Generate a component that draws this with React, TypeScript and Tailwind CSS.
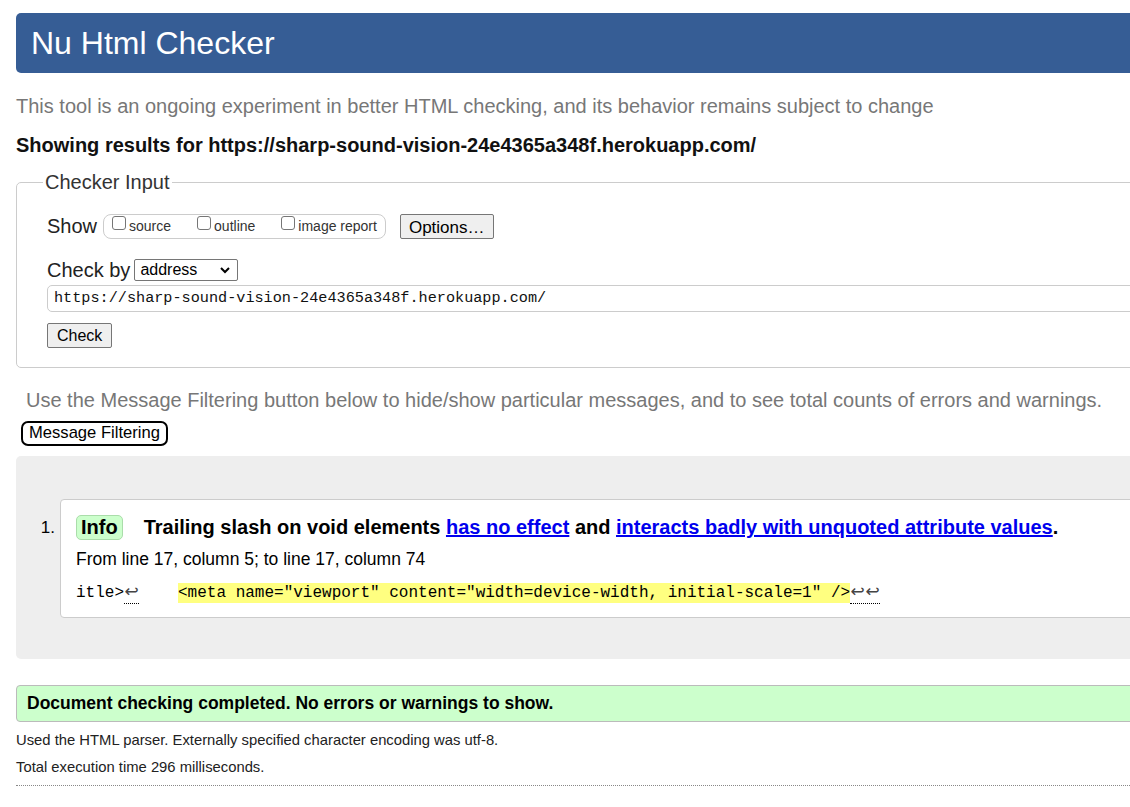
import React from 'react';

const sans = "font-['Liberation_Sans',Arial,sans-serif]";
const mono = "font-['Liberation_Mono','DejaVu_Sans_Mono',monospace]";

const Checkbox: React.FC<{ label: string }> = ({ label }) => (
  <label className="flex items-center gap-[3px] mr-[26px] last:mr-0">
    <span className="w-[14px] h-[14px] border border-[#767676] rounded-[3px] bg-white -translate-y-[3px]" />
    <span className="text-[14px] text-[#333]">{label}</span>
  </label>
);

// little return-arrow marker used in the source extract
const Ret: React.FC = () => (
  <span className="inline-block w-[15px] text-center font-['DejaVu_Sans',sans-serif] text-[17px] leading-[18px] text-[#444]">↩</span>
);

const App: React.FC = () => {
  return (
    <div className={`${sans} w-[1130px] h-[807px] overflow-hidden bg-white text-black`}>
      <div className="w-[1180px] pl-4 pt-[13px]">
        {/* Header */}
        <div className="h-[60px] bg-[#365d95] rounded-[5px] flex items-center pl-[15px]">
          <h1 className="text-[32px] text-white leading-none">Nu Html Checker</h1>
        </div>

        <p className="mt-[21px] text-[20px] text-[#777] leading-[24px]">
          This tool is an ongoing experiment in better HTML checking, and its behavior remains subject to change
        </p>
        <p className="mt-[15px] text-[20px] font-bold leading-[24px] text-[#111]">
          Showing results for https://sharp-sound-vision-24e4365a348f.herokuapp.com/
        </p>

        {/* Checker Input */}
        <fieldset className="mt-[10px] border border-[#ccc] rounded-[5px] pl-[30px] pb-[19px] pt-[2px]">
          <legend className="text-[20px] text-[#333] px-[2px] -ml-[4px]">Checker Input</legend>
          <div className="flex items-center mt-[12px]">
            <span className="text-[20px] text-[#222] mr-[6px]">Show</span>
            <div className="flex items-center h-[25px] border border-[#ccc] rounded-[8px] pl-[8px] pr-[8px]">
              <Checkbox label="source" />
              <Checkbox label="outline" />
              <Checkbox label="image report" />
            </div>
            <button className="ml-[14px] h-[25px] px-[8px] border border-[#767676] rounded-[2px] bg-[#efefef] text-[17px] text-black">
              Options…
            </button>
          </div>
          <div className="flex items-center mt-[14px]">
            <span className="text-[20px] text-[#222] mr-[4px]">Check by</span>
            <div className="w-[104px] h-[22px] border border-[#767676] rounded-[2px] flex items-center justify-between px-[5px]">
              <span className="text-[16px]">address</span>
              <svg width="12" height="8" viewBox="0 0 12 8" className="mr-[1px]">
                <path d="M2 2l4 4 4-4" stroke="#000" strokeWidth="2" fill="none" />
              </svg>
            </div>
          </div>
          <div className={`${mono} mt-0 h-[27px] border border-[#ccc] rounded-[5px] flex items-center pl-[6px] text-[15.2px] text-[#111]`}>
            https://sharp-sound-vision-24e4365a348f.herokuapp.com/
          </div>
          <button className="mt-[11px] h-[25px] px-[9px] border border-[#767676] rounded-[2px] bg-[#efefef] text-[16px] text-black">
            Check
          </button>
        </fieldset>

        <p className="mt-[20px] ml-[10px] text-[20px] text-[#777] leading-[24px]">
          Use the Message Filtering button below to hide/show particular messages, and to see total counts of errors and warnings.
        </p>
        <button className="mt-[9px] ml-[5px] h-[25px] px-[6px] border-2 border-black rounded-[7px] bg-white text-[16.6px] leading-none">
          Message Filtering
        </button>

        {/* Results */}
        <div className="mt-[10px] bg-[#eee] rounded-[5px] pt-[43px] pb-[41px] flex">
          <span className="w-[44px] text-right pr-[5px] text-[17px] pt-[16px]">1.</span>
          <div className="flex-1 bg-white border border-[#ccc] rounded-[4px] pl-[15px] pt-[12px] pb-[13px]">
            <div className="flex items-center">
              <span className="h-[25px] px-[4px] flex items-center bg-[#ccffcc] border border-[#aaddaa] rounded-[5px] text-[20px] font-bold">
                Info
              </span>
              <span className="ml-[21px] text-[20px] font-bold">
                Trailing slash on void elements{' '}
                <a className="text-[#0000ee] underline">has no effect</a> and{' '}
                <a className="text-[#0000ee] underline">interacts badly with unquoted attribute values</a>.
              </span>
            </div>
            <p className="mt-[6px] text-[17.5px] leading-[22px]">From line 17, column 5; to line 17, column 74</p>
            <div className={`${mono} mt-[12px] text-[16px] flex items-center whitespace-pre leading-[20px]`}>
              <span>itle&gt;</span>
              <span className="border-b border-dotted border-black">
                <Ret />
              </span>
              <span className="ml-[39px] bg-[#ffff80]">{'<meta name="viewport" content="width=device-width, initial-scale=1" />'}</span>
              <span className="border-b border-dotted border-black">
                <Ret />
                <Ret />
              </span>
            </div>
          </div>
        </div>

        <div className="mt-[26px] h-[37px] bg-[#ccffcc] border border-[#bbb] rounded-[4px] flex items-center pl-[10px]">
          <span className="text-[17.5px] font-bold">Document checking completed. No errors or warnings to show.</span>
        </div>
        <p className="mt-[8px] text-[14.8px] text-[#222] leading-[20px]">
          Used the HTML parser. Externally specified character encoding was utf-8.
        </p>
        <p className="mt-[7px] text-[14.8px] text-[#222] leading-[20px]">Total execution time 296 milliseconds.</p>
        <div className="mt-[8px] border-t border-dotted border-[#888]" />
      </div>
    </div>
  );
};

export default App;
